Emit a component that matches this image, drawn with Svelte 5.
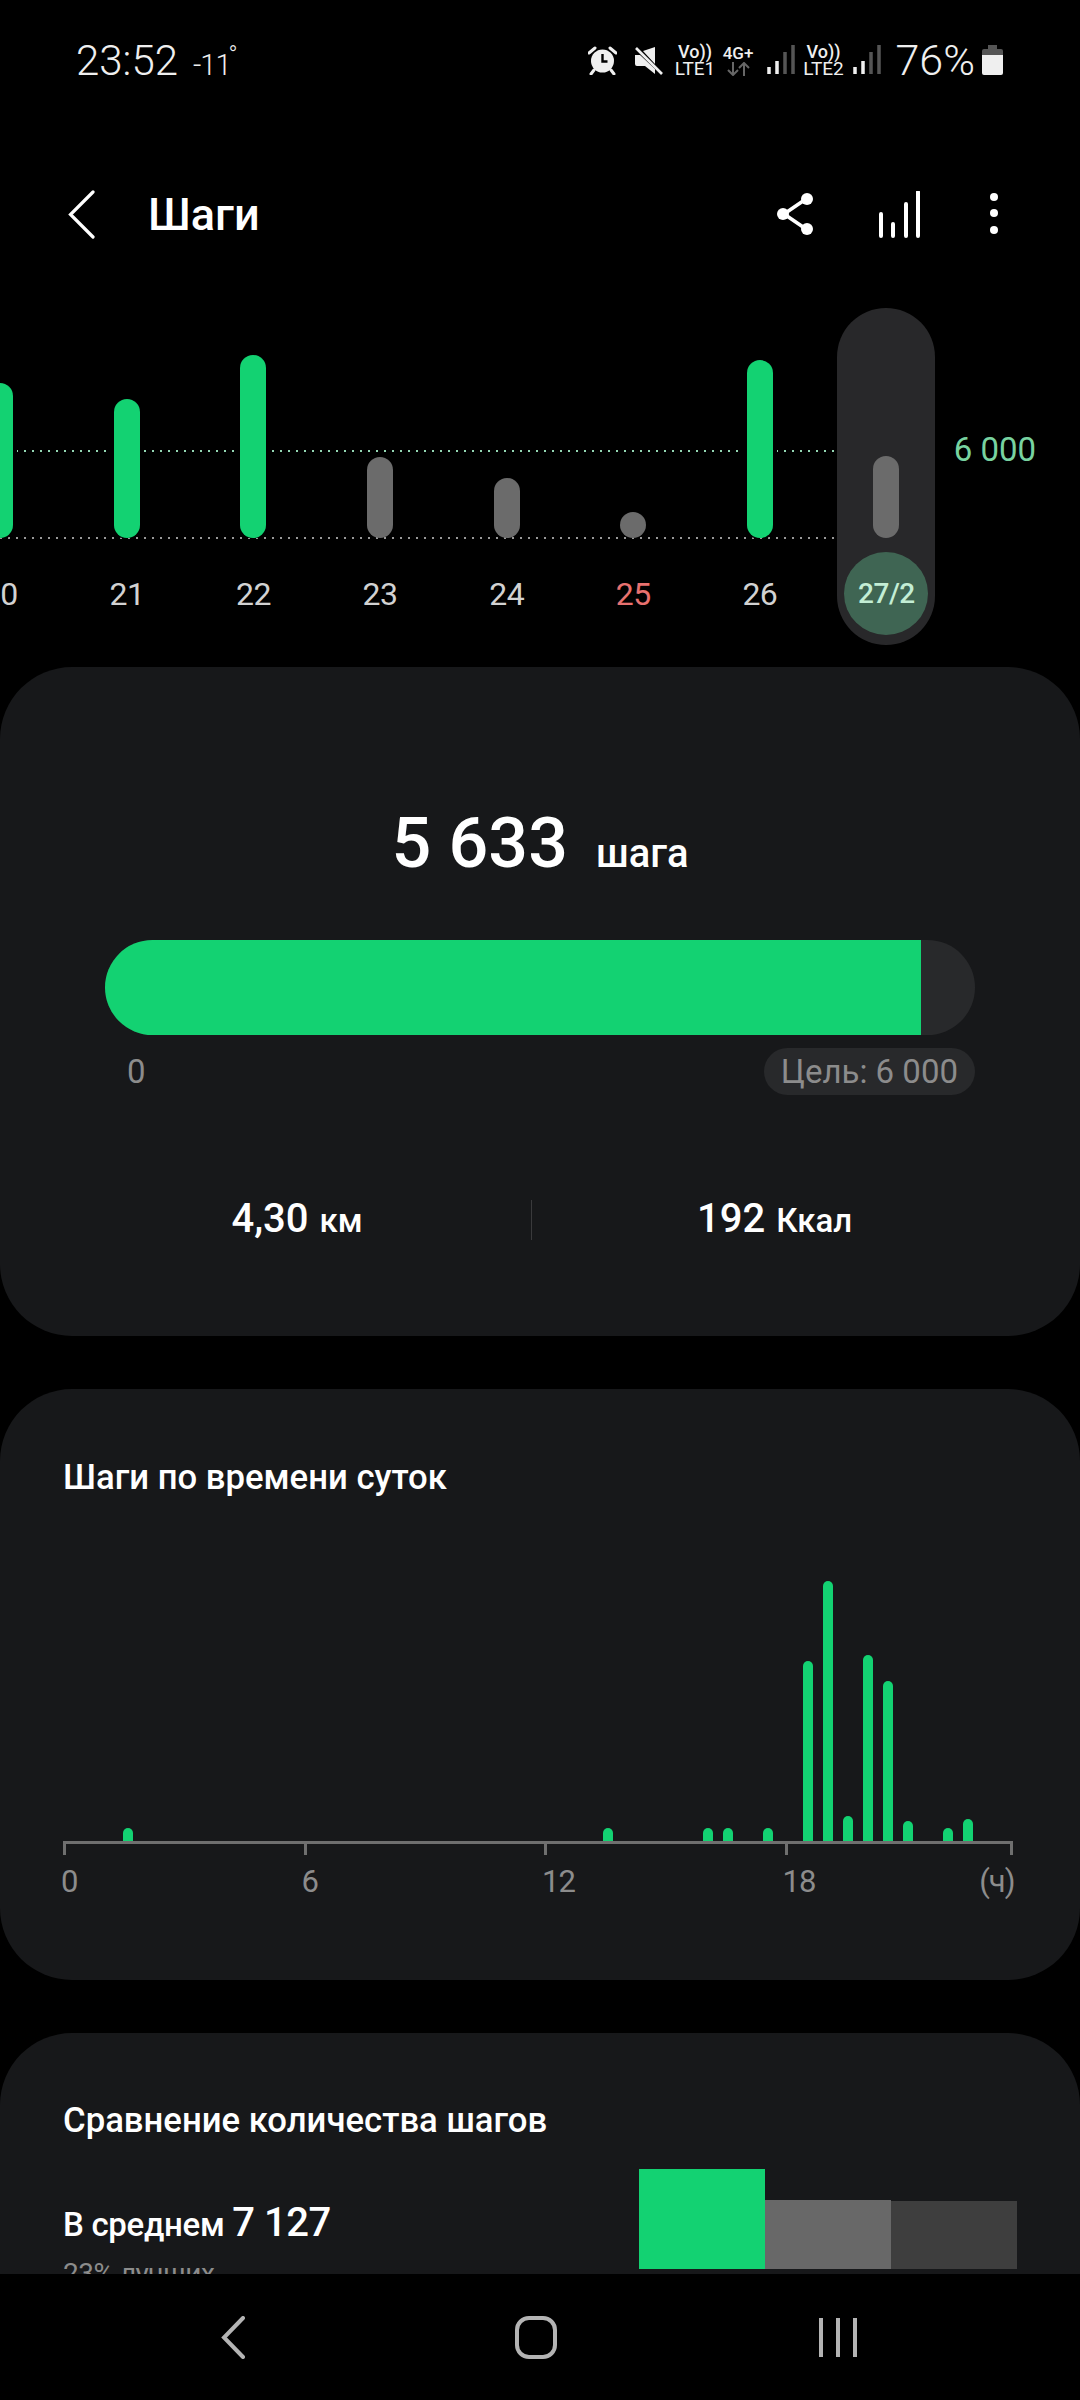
<script lang="ts">
	// Steps per day, heights in px from the chart baseline.
	const days = [
		{ label: '20', h: 155, met: true },
		{ label: '21', h: 139, met: true },
		{ label: '22', h: 183, met: true },
		{ label: '23', h: 81, met: false },
		{ label: '24', h: 60, met: false },
		{ label: '25', h: 26, met: false, sunday: true },
		{ label: '26', h: 178, met: true },
		{ label: '27/2', h: 82, met: false, selected: true }
	];

	// Half-hour slots with any activity; the rest of the 48 stay empty.
	const activity: Record<number, number> = {
		3: 14, 27: 14, 32: 14, 33: 14, 35: 14, 37: 181, 38: 261,
		39: 26, 40: 187, 41: 161, 42: 21, 44: 14, 45: 23
	};
	const slots = Array.from({ length: 48 }, (_, i) => activity[i] ?? 0);
</script>

<div class="phone">
	<div class="status">
		<div class="clock">23:52<span class="temp">-11</span><span class="deg">°</span></div>
		<div class="indicators">
			<svg class="alarm" width="29" height="29" viewBox="0 0 29 29">
				<circle cx="14.5" cy="15" r="11.5" fill="#efefef" />
				<path d="M14.5 8v7.5h5" fill="none" stroke="#000" stroke-width="2.4" />
				<path d="M1 7l6-5M28 7l-6-5" stroke="#efefef" stroke-width="3" stroke-linecap="round" />
				<path d="M6 24l-3 4M23 24l3 4" stroke="#efefef" stroke-width="3" stroke-linecap="round" />
			</svg>
			<svg class="mute" width="29" height="29" viewBox="0 0 29 29">
				<path d="M21 1v17L9 5zM1 9h5l15 14v5L11 20H3q-2 0-2-2z" fill="#efefef" />
				<path d="M2 2l26 26" stroke="#efefef" stroke-width="2.600" />
			</svg>
			<div class="volte">
				<span class="vo">Vo))</span>
				<span class="lte">LTE1</span>
			</div>
			<div class="net">
				<span class="g">4G+</span>
				<svg width="23" height="14" viewBox="0 0 23 14">
					<path d="M6 0v13M1 8l5 5 5-5" fill="none" stroke="#666" stroke-width="2" />
					<path d="M17 14V1M12 6l5-5 5 5" fill="none" stroke="#666" stroke-width="2" />
				</svg>
			</div>
			<svg class="signal" width="28" height="30" viewBox="0 0 28 30">
				<path d="M2 29v-7M10 29v-13" stroke="#efefef" stroke-width="3.5" />
				<path d="M18 29V7M26 29V0" stroke="#555" stroke-width="3.5" />
			</svg>
			<div class="volte two">
				<span class="vo">Vo))</span>
				<span class="lte">LTE2</span>
			</div>
			<svg class="signal second" width="28" height="30" viewBox="0 0 28 30">
				<path d="M2 29v-7M10 29v-13" stroke="#efefef" stroke-width="3.5" />
				<path d="M18 29V7M26 29V0" stroke="#555" stroke-width="3.5" />
			</svg>
			<span class="battery-text">76%</span>
			<svg class="battery" width="21" height="30" viewBox="0 0 21 30">
				<path d="M6 0h9v4h4q2 0 2 2v5H0V6q0-2 2-2h4z" fill="#555" />
				<path d="M0 10h21v18q0 2-2 2H2q-2 0-2-2z" fill="#efefef" />
			</svg>
		</div>
	</div>

	<header class="appbar">
		<svg width="27" height="49" viewBox="0 0 27 49" aria-label="Назад">
			<path d="M25 2L2.500 24.500 25 47" fill="none" stroke="#fff" stroke-width="3.200" stroke-linecap="round" />
		</svg>
		<h1>Шаги</h1>
		<div class="actions">
			<svg width="38" height="44" viewBox="0 0 38 44">
				<path d="M30 7L8 22l22 15" fill="none" stroke="#fff" stroke-width="3.600" />
				<circle cx="31" cy="7" r="6" fill="#fff" />
				<circle cx="7" cy="22" r="6" fill="#fff" />
				<circle cx="31" cy="37" r="6" fill="#fff" />
			</svg>
			<svg class="stats-icon" width="42" height="47" viewBox="0 0 42 47">
				<path d="M4 45V23M16 45V33M29 45V13M41 45V1" transform="translate(-2 0)" fill="none" stroke="#fff" stroke-width="4" stroke-linecap="round" />
			</svg>
			<svg class="dots" width="8" height="42" viewBox="0 0 8 42">
				<circle cx="4" cy="4" r="4" fill="#fff" />
				<circle cx="4" cy="20" r="4" fill="#fff" />
				<circle cx="4" cy="37" r="4" fill="#fff" />
			</svg>
		</div>
	</header>

	<section class="week">
		<div class="dotted goal"></div>
		<div class="dotted base"></div>
		<div class="days">
			{#each days as day}
				<div class="day">
					<div class="day-inner" class:selected={day.selected}>
						<div class="bar-slot">
							<div class="bar" class:met={day.met} style="height: {day.h}px"></div>
						</div>
						<div class="day-label" class:sunday={day.sunday}>{day.label}</div>
					</div>
				</div>
			{/each}
			<div class="goal-label">6 000</div>
		</div>
	</section>

	<main class="content">
		<section class="card summary">
			<div class="total"><strong>5 633</strong><span>шага</span></div>
			<div class="progress"><div class="fill"></div></div>
			<div class="scale">
				<span>0</span>
				<span class="target">Цель: 6 000</span>
			</div>
			<div class="stats">
				<div class="stat left"><b>4,30</b><span>км</span></div>
				<div class="divider"></div>
				<div class="stat"><b>192</b><span>Ккал</span></div>
			</div>
		</section>

		<section class="card hourly">
			<h2>Шаги по времени суток</h2>
			<div class="hour-bars">
				{#each slots as h}
					<div class="slot">
						{#if h}<div class="hour-bar" style="height: {h}px"></div>{/if}
					</div>
				{/each}
			</div>
			<div class="axis">
				<i></i><i></i><i></i><i class="last"></i>
			</div>
			<div class="hour-labels">
				<span>0</span>
				<span>6</span>
				<span>12</span>
				<span class="late"><span>18</span><span>(ч)</span></span>
			</div>
		</section>

		<section class="card compare">
			<h2>Сравнение количества шагов</h2>
			<div class="compare-row">
				<div class="compare-text">
					<div class="average">В среднем <b>7 127</b></div>
					<div class="rank">23% лучших</div>
				</div>
				<div class="compare-bars">
					<div class="cbar me"></div>
					<div class="cbar avg"></div>
					<div class="cbar rest"></div>
				</div>
			</div>
		</section>
	</main>

	<nav class="nav">
		<svg width="24" height="43" viewBox="0 0 24 43">
			<path d="M22 2L3 21.500 22 41" fill="none" stroke="#b4b4b4" stroke-width="4" stroke-linecap="round" />
		</svg>
		<svg width="42" height="43" viewBox="0 0 42 43">
			<rect x="2" y="2" width="38" height="39" rx="12" fill="none" stroke="#b4b4b4" stroke-width="4" />
		</svg>
		<svg width="38" height="41" viewBox="0 0 38 41">
			<path d="M2 1v39M19 1v39M36 1v39" fill="none" stroke="#b4b4b4" stroke-width="4" />
		</svg>
	</nav>
</div>

<style>
	:global(body) {
		margin: 0;
		background: #000;
	}

	.phone {
		width: 1080px;
		height: 2400px;
		display: flex;
		flex-direction: column;
		overflow: hidden;
		background: #000;
		color: #fff;
		font-family: Roboto, 'Noto Sans', sans-serif;
	}

	.status {
		flex: none;
		height: 120px;
		padding: 0 77px 0 76px;
		display: flex;
		align-items: center;
		justify-content: space-between;
		box-sizing: border-box;
		color: #efefef;
	}

	.clock {
		font-size: 42px;
		font-weight: 300;
		line-height: 40px;
		white-space: nowrap;
	}

	.temp {
		margin-left: 15px;
		font-size: 29px;
		letter-spacing: -1px;
	}

	.deg {
		margin-left: -2px;
		font-size: 24px;
		vertical-align: 12px;
	}

	.indicators {
		display: flex;
		align-items: center;
	}

	.mute {
		margin-left: 17px;
	}

	.volte,
	.net {
		display: flex;
		flex-direction: column;
		align-items: center;
		font-weight: 500;
		line-height: 17px;
		white-space: nowrap;
	}

	.volte {
		width: 39px;
		margin-left: 13px;
	}

	.volte.two {
		width: 40px;
		margin-left: 9px;
	}

	.vo {
		font-size: 18px;
	}

	.lte {
		font-size: 19px;
		font-weight: 400;
	}

	.net {
		width: 31px;
		margin-left: 8px;
	}

	.g {
		font-size: 17px;
	}

	.signal {
		margin-left: 13px;
	}

	.signal.second {
		margin-left: 9px;
	}

	.battery-text {
		margin-left: 15px;
		font-size: 43px;
		font-weight: 300;
		line-height: 40px;
	}

	.battery {
		margin-left: 7px;
	}

	.appbar {
		flex: none;
		height: 188px;
		padding: 0 82px 0 68px;
		display: flex;
		align-items: center;
		box-sizing: border-box;
	}

	.appbar h1 {
		margin: 0 0 0 53px;
		font-size: 45px;
		font-weight: 500;
	}

	.actions {
		margin-left: auto;
		display: flex;
		align-items: center;
	}

	.stats-icon {
		margin-left: 65px;
	}

	.dots {
		margin-left: 69px;
	}

	.week {
		position: relative;
		flex: none;
		height: 337px;
		overflow: hidden;
	}

	.dotted {
		position: absolute;
		left: 0;
		width: 837px;
		height: 2px;
	}

	.goal {
		top: 142px;
		background: repeating-linear-gradient(90deg, #93d6b3 0 2px, transparent 2px 8px);
	}

	.base {
		top: 229px;
		background: repeating-linear-gradient(90deg, #999 0 2px, transparent 2px 8px);
	}

	.days {
		position: relative;
		display: flex;
		margin-left: -63px;
		height: 100%;
	}

	.day {
		flex: none;
		width: 126.6px;
		display: flex;
		justify-content: center;
	}

	.day-inner {
		width: 98px;
		display: flex;
		flex-direction: column;
		align-items: center;
		border-radius: 49px;
	}

	.day-inner.selected {
		background: #28282a;
	}

	.bar-slot {
		flex: none;
		height: 230px;
		display: flex;
		align-items: flex-end;
	}

	.bar {
		width: 26px;
		border-radius: 13px;
		background: #6b6b6b;
	}

	.bar.met {
		background: #13d272;
		box-shadow: -4px 0 #000, 4px 0 #000;
	}

	.day-label {
		margin-top: 14px;
		width: 84px;
		height: 83px;
		display: flex;
		align-items: center;
		justify-content: center;
		font-size: 32px;
		letter-spacing: -0.5px;
		color: #d2d2d2;
	}

	.day-label.sunday {
		color: #e8716f;
	}

	.selected .day-label {
		border-radius: 50%;
		background: #3f6553;
		color: #c3eed5;
		font-size: 28px;
		font-weight: 500;
		letter-spacing: -0.5px;
	}

	.goal-label {
		flex: none;
		margin: 122px 0 0 4px;
		font-size: 33px;
		line-height: 40px;
		color: #78d3a0;
		white-space: nowrap;
	}

	.content {
		flex: 1;
		min-height: 0;
		overflow: hidden;
		padding-top: 22px;
		display: flex;
		flex-direction: column;
		gap: 53px;
	}

	.card {
		flex: none;
		box-sizing: border-box;
		border-radius: 72px;
		background: #17181a;
	}

	.card h2 {
		margin: 0;
		font-size: 34.700px;
		font-weight: 500;
		line-height: 40px;
	}

	.summary {
		height: 669px;
		padding: 143px 105px 0;
	}

	.total {
		height: 66px;
		display: flex;
		justify-content: center;
		align-items: baseline;
		line-height: 66px;
	}

	.total strong {
		font-size: 70px;
		font-weight: 500;
	}

	.total span {
		margin-left: 28px;
		font-size: 40px;
		font-weight: 500;
	}

	.progress {
		margin-top: 64px;
		height: 95px;
		border-radius: 48px;
		overflow: hidden;
		background: #28292b;
	}

	.fill {
		width: 816px;
		height: 100%;
		background: #13d272;
	}

	.scale {
		margin-top: 13px;
		height: 47px;
		padding-left: 22px;
		display: flex;
		align-items: center;
		justify-content: space-between;
		font-size: 33px;
		color: #8c8c8c;
	}

	.target {
		height: 47px;
		padding: 0 17px;
		display: flex;
		align-items: center;
		border-radius: 24px;
		background: #28292b;
	}

	.stats {
		margin: 103px -42px 3px;
		height: 40px;
		display: flex;
		align-items: center;
	}

	.stat {
		flex: 1;
		display: flex;
		justify-content: center;
		align-items: baseline;
		font-weight: 500;
	}

	.stat.left {
		flex: 0 0 468px;
	}

	.stat b {
		font-size: 40px;
		font-weight: 500;
	}

	.stat span {
		margin-left: 11px;
		font-size: 33px;
	}

	.divider {
		flex: none;
		width: 1px;
		height: 40px;
		margin-top: 3px;
		background: #3a3a3c;
	}

	.hourly {
		height: 591px;
		padding: 68px 63px 0;
	}

	.hour-bars {
		margin: 64px 0 0 -5px;
		height: 281px;
		display: flex;
		align-items: flex-end;
	}

	.slot {
		flex: none;
		width: 20px;
		display: flex;
		justify-content: center;
	}

	.hour-bar {
		width: 10px;
		border-radius: 5px 5px 0 0;
		background: #13d272;
	}

	.axis {
		display: flex;
		margin-top: -1px;
	}

	.axis i {
		flex: none;
		box-sizing: border-box;
		width: 240.500px;
		height: 14px;
		border-top: 3px solid #6f6f6f;
		border-left: 3px solid #6f6f6f;
	}

	.axis i.last {
		width: 228px;
		border-right: 3px solid #6f6f6f;
	}

	.hour-labels {
		margin: 9px 0 0 -2px;
		display: flex;
		font-size: 31px;
		line-height: 36px;
		letter-spacing: -1px;
		color: #8c8c8c;
	}

	.hour-labels > span {
		flex: none;
		width: 240.500px;
	}

	.hour-labels > span.late {
		width: 232px;
		display: flex;
		justify-content: space-between;
	}

	.compare {
		height: 600px;
		padding: 67px 63px 0;
	}

	.compare-row {
		margin-top: 29px;
		display: flex;
		justify-content: space-between;
	}

	.compare-text {
		margin-top: 30px;
	}

	.average {
		font-size: 33px;
		font-weight: 500;
		line-height: 48px;
		letter-spacing: -0.3px;
	}

	.average b {
		font-size: 40px;
		font-weight: 500;
		letter-spacing: -0.5px;
	}

	.rank {
		margin-top: 7px;
		font-size: 28px;
		line-height: 36px;
		letter-spacing: -0.5px;
		color: #8c8c8c;
	}

	.compare-bars {
		flex: none;
		height: 100px;
		display: flex;
		align-items: flex-end;
	}

	.cbar {
		width: 126px;
	}

	.me {
		height: 100px;
		background: #13d272;
	}

	.avg {
		height: 69px;
		background: #686868;
	}

	.rest {
		height: 68px;
		background: #3e3e3e;
	}

	.nav {
		flex: none;
		height: 126px;
		padding-left: 82px;
		display: grid;
		grid-template-columns: repeat(3, 302.500px);
		align-items: center;
		justify-items: center;
		background: #000;
	}
</style>
